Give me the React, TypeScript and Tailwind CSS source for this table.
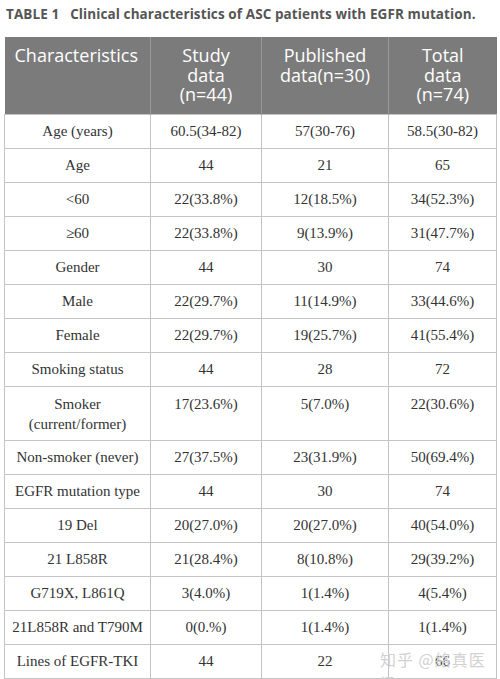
const ROWS: [string, string, string, string][] = [
  ["Age (years)", "60.5(34-82)", "57(30-76)", "58.5(30-82)"],
  ["Age", "44", "21", "65"],
  ["<60", "22(33.8%)", "12(18.5%)", "34(52.3%)"],
  ["≥60", "22(33.8%)", "9(13.9%)", "31(47.7%)"],
  ["Gender", "44", "30", "74"],
  ["Male", "22(29.7%)", "11(14.9%)", "33(44.6%)"],
  ["Female", "22(29.7%)", "19(25.7%)", "41(55.4%)"],
  ["Smoking status", "44", "28", "72"],
  ["Smoker (current/former)", "17(23.6%)", "5(7.0%)", "22(30.6%)"],
  ["Non-smoker (never)", "27(37.5%)", "23(31.9%)", "50(69.4%)"],
  ["EGFR mutation type", "44", "30", "74"],
  ["19 Del", "20(27.0%)", "20(27.0%)", "40(54.0%)"],
  ["21 L858R", "21(28.4%)", "8(10.8%)", "29(39.2%)"],
  ["G719X, L861Q", "3(4.0%)", "1(1.4%)", "4(5.4%)"],
  ["21L858R and T790M", "0(0.%)", "1(1.4%)", "1(1.4%)"],
  ["Lines of EGFR-TKI", "44", "22", "66"],
  ["", "", "", ""],
];

export default function App() {
  return (
    <div className="relative w-[500px] h-[679px] overflow-hidden bg-white">
      <h1 className="pl-[6px] pt-[4px] h-[37px] text-[13.5px] font-bold text-[#555] font-['Open_Sans',sans-serif] tracking-[0.1px]">
        TABLE 1&nbsp;&nbsp; Clinical characteristics of ASC patients with EGFR mutation.
      </h1>

      <table className="ml-[4px] w-[492px] border-collapse table-fixed">
        <colgroup>
          <col className="w-[146px]" />
          <col className="w-[111px]" />
          <col className="w-[127px]" />
          <col className="w-[108px]" />
        </colgroup>
        <thead>
          <tr className="h-[77px] bg-[#7b7b7b] text-white font-['Open_Sans',sans-serif] text-[18px] leading-[19.5px]">
            <th className="align-top pt-[9px] pl-[10px] text-left font-normal border-r border-[#9a9a9a]">Characteristics</th>
            <th className="align-top pt-[9px] font-normal border-r border-[#9a9a9a]">Study<br />data<br />(n=44)</th>
            <th className="align-top pt-[9px] font-normal border-r border-[#9a9a9a]">Published<br />data(n=30)</th>
            <th className="align-top pt-[9px] font-normal">Total<br />data<br />(n=74)</th>
          </tr>
        </thead>
        <tbody className="font-['Liberation_Serif',serif] text-[15px] text-[#333] leading-[20px]">
          {ROWS.map((r, i) => (
            <tr key={i} className={r[0].startsWith("Smoker") ? "h-[54px]" : "h-[34px]"}>
              {r.map((c, j) => (
                <td
                  key={j}
                  className={`border border-[#c4c4c4] text-center ${r[0].startsWith("Smoker") ? "align-top pt-[7px]" : "align-middle"} ${j === 0 && r[0].startsWith("Smoker") ? "px-[14px]" : ""}`}
                >
                  {c}
                </td>
              ))}
            </tr>
          ))}
        </tbody>
      </table>

      <div className="absolute left-[380px] top-[647px] text-[16px] text-[#d2d2d2] font-['Noto_Sans_CJK_SC',sans-serif] tracking-[1px]">
        知乎 @絡真医讯
      </div>
    </div>
  );
}
